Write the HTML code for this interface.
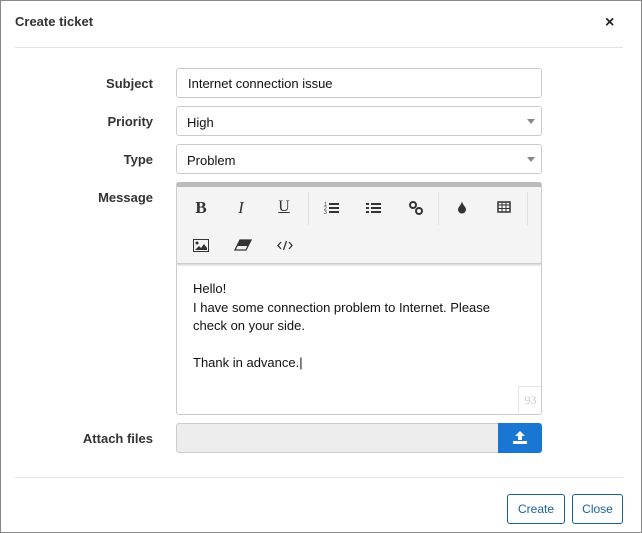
<!DOCTYPE html>
<html><head><style>
*{box-sizing:border-box;margin:0;padding:0}
body{width:642px;height:533px;background:#fff;font-family:"Liberation Sans",sans-serif;font-size:13px;color:#222;position:relative;overflow:hidden}
.frame{position:absolute;left:0;top:0;width:642px;height:533px;border:1px solid #888}
.abs{position:absolute}
.lbl{position:absolute;right:489px;font-weight:bold;font-size:13px;color:#333}
.inp{position:absolute;left:176px;width:366px;height:30px;border:1px solid #ccc;border-radius:3px;padding:0 10px;line-height:29px;font-size:13px;color:#111}
.caret{position:absolute;right:6px;top:12px;border-left:4px solid transparent;border-right:4px solid transparent;border-top:5px solid #888}
.tb{position:absolute;color:#333;font-size:16px;text-align:center;width:24px}
.btn{position:absolute;top:494px;height:30px;border:1px solid #1a5f9e;border-radius:3px;color:#1a5f9e;font-size:12px;line-height:28px;text-align:center}
</style></head><body>
<div class="frame"></div>
<div class="abs" style="left:15px;top:14px;font-weight:bold;font-size:13px;color:#333">Create ticket</div>
<div class="abs" style="left:605px;top:14px;font-weight:bold;font-size:16px;color:#222">×</div>
<div class="abs" style="left:15px;top:47px;width:608px;height:1px;background:#e2e2e2"></div>

<div class="lbl" style="top:76px">Subject</div>
<div class="inp" style="top:68px;padding-left:11px">Internet connection issue</div>
<div class="lbl" style="top:114px">Priority</div>
<div class="inp" style="top:106px;line-height:31px">High<span class="caret"></span></div>
<div class="lbl" style="top:152px">Type</div>
<div class="inp" style="top:144px;line-height:31px">Problem<span class="caret"></span></div>
<div class="lbl" style="top:190px">Message</div>

<div class="abs" style="left:176px;top:182px;width:366px;height:233px;border:1px solid #ccc;border-top:5px solid #bbb;border-radius:3px;overflow:hidden">
 <div class="abs" style="left:0;top:0;width:366px;height:77px;background:#f4f4f4;border-bottom:1px solid #ccc;box-shadow:0 1px 2px #ccc"></div>
 <div class="abs" style="left:131px;top:5px;width:1px;height:33px;background:#e0e0e0"></div>
 <div class="abs" style="left:261px;top:5px;width:1px;height:33px;background:#e0e0e0"></div>
 <div class="abs" style="left:350px;top:5px;width:1px;height:33px;background:#e0e0e0"></div>
 <div class="tb" style="left:12px;top:11px;font-family:'Liberation Serif',serif;font-weight:bold;font-size:17px">B</div>
 <div class="tb" style="left:52px;top:11px;font-family:'Liberation Serif',serif;font-style:italic;font-size:17px">I</div>
 <div class="tb" style="left:95px;top:11px;font-family:'Liberation Serif',serif;text-decoration:underline;font-size:16px">U</div>
 <svg class="abs" style="left:147px;top:14px" width="16" height="14"><g fill="#333"><rect x="5" y="2" width="10" height="2"/><rect x="5" y="6" width="10" height="2"/><rect x="5" y="10" width="10" height="2"/><text x="0" y="5" font-size="5">1</text><text x="0" y="9" font-size="5">2</text><text x="0" y="13" font-size="5">3</text></g></svg>
 <svg class="abs" style="left:189px;top:14px" width="16" height="14"><g fill="#333"><rect x="0" y="2" width="3" height="2"/><rect x="0" y="6" width="3" height="2"/><rect x="0" y="10" width="3" height="2"/><rect x="5" y="2" width="10" height="2"/><rect x="5" y="6" width="10" height="2"/><rect x="5" y="10" width="10" height="2"/></g></svg>
 <svg class="abs" style="left:231px;top:13px" width="16" height="16"><g fill="none" stroke="#333" stroke-width="2"><circle cx="5" cy="5" r="3"/><circle cx="11" cy="11" r="3"/></g></svg>
 <svg class="abs" style="left:280px;top:13px" width="10" height="14"><path d="M5 1 C5 4 1 7 1 9.5 A4 4 0 0 0 9 9.5 C9 7 5 4 5 1Z" fill="#333"/></svg>
 <svg class="abs" style="left:320px;top:14px" width="14" height="12"><rect x="1" y="1" width="12" height="10" fill="none" stroke="#333" stroke-width="1.5"/><path d="M1 4H13M1 7.5H13M5 1V11M9 1V11" stroke="#333"/></svg>
 <svg class="abs" style="left:16px;top:52px" width="16" height="13"><rect x="0.5" y="0.5" width="15" height="12" fill="none" stroke="#333"/><circle cx="4" cy="4" r="1.5" fill="#333"/><path d="M2 11 L6 7 L8 9 L11 5 L14 9 L14 11Z" fill="#333"/></svg>
 <svg class="abs" style="left:57px;top:52px" width="18" height="12"><path d="M6 1 H17 L12 11 H1Z" fill="none" stroke="#333" stroke-width="1.3"/><path d="M6 1 H17 L14 7 H3Z" fill="#333"/></svg>
 <svg class="abs" style="left:100px;top:53px" width="16" height="11"><path d="M4 2 L1 5.5 L4 9 M12 2 L15 5.5 L12 9 M9.5 1 L6.5 10" fill="none" stroke="#333" stroke-width="1.3"/></svg>
 <div class="abs" style="left:16px;top:93px;font-size:13px;line-height:18.5px;color:#111">Hello!<br>I have some connection problem to Internet. Please<br>check on your side.<br><br>Thank in advance.|</div>
 <div class="abs" style="left:341px;top:199px;width:24px;height:28px;border-left:1px solid #e5e5e5;border-top:1px solid #e5e5e5;color:#ccc;font-family:'Liberation Serif',serif;font-size:12px;text-align:center;line-height:26px">93</div>
</div>

<div class="lbl" style="top:431px">Attach files</div>
<div class="abs" style="left:176px;top:423px;width:323px;height:30px;background:#ededed;border:1px solid #ccc;border-right:none;border-radius:3px 0 0 3px"></div>
<div class="abs" style="left:498px;top:423px;width:44px;height:30px;background:#1976d2;border-radius:0 3px 3px 0"></div>
<svg class="abs" style="left:513px;top:431px" width="14" height="13"><path d="M7 0 L12 5 H9 V9 H5 V5 H2Z" fill="#fff"/><rect x="0" y="10" width="14" height="3" fill="#fff"/></svg>

<div class="abs" style="left:15px;top:477px;width:608px;height:1px;background:#e2e2e2"></div>
<div class="btn" style="left:507px;width:58px">Create</div>
<div class="btn" style="left:572px;width:51px">Close</div>
</body></html>
